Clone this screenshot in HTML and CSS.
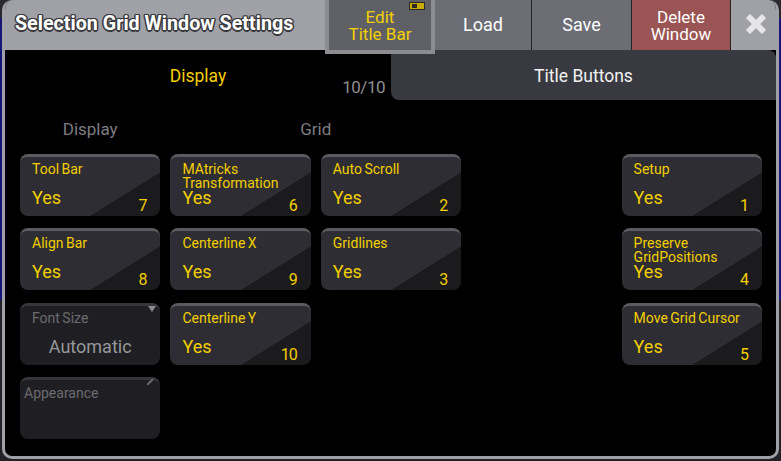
FILE: index.html
```html
<!DOCTYPE html>
<html lang="en">
<head>
  <meta charset="UTF-8" />
  <title>Selection Grid Window Settings</title>
  <link rel="stylesheet" href="styles.css">
</head>
<body>
  <div class="window">
    <header class="titlebar">
      <h1 class="title">Selection Grid Window Settings</h1>
      <div class="tb-btn tb-edit">Edit<br>Title Bar<span class="toggle"><span class="knob"></span></span></div>
      <div class="tb-btn tb-plain">Load</div>
      <div class="tb-btn tb-plain tb-sep">Save</div>
      <div class="tb-btn tb-delete tb-sep">Delete<br>Window</div>
      <div class="tb-btn tb-close tb-sep">
        <svg width="22" height="22" viewBox="0 0 22 22">
          <path d="M3 3 L19 19 M19 3 L3 19" stroke="#e6e6e8" stroke-width="6" fill="none" />
        </svg>
      </div>
    </header>

    <nav class="tabs">
      <div class="tab tab-active">Display<span class="pager">10/10</span></div>
      <div class="tab tab-other">Title Buttons</div>
    </nav>

    <main class="content">
      <div class="sections">
        <div class="sec">Display</div>
        <div class="sec sec-grid">Grid</div>
      </div>

      <div class="grid">
        <div class="cell">
          <div class="cell-label">Tool Bar</div>
          <div class="cell-row"><span class="cell-value">Yes</span><span class="cell-num">7</span></div>
        </div>
        <div class="cell">
          <div class="cell-label">MAtricks<br>Transformation</div>
          <div class="cell-row"><span class="cell-value">Yes</span><span class="cell-num">6</span></div>
        </div>
        <div class="cell">
          <div class="cell-label">Auto Scroll</div>
          <div class="cell-row"><span class="cell-value">Yes</span><span class="cell-num">2</span></div>
        </div>
        <div class="cell col5">
          <div class="cell-label">Setup</div>
          <div class="cell-row"><span class="cell-value">Yes</span><span class="cell-num">1</span></div>
        </div>

        <div class="cell">
          <div class="cell-label">Align Bar</div>
          <div class="cell-row"><span class="cell-value">Yes</span><span class="cell-num">8</span></div>
        </div>
        <div class="cell">
          <div class="cell-label">Centerline X</div>
          <div class="cell-row"><span class="cell-value">Yes</span><span class="cell-num">9</span></div>
        </div>
        <div class="cell">
          <div class="cell-label">Gridlines</div>
          <div class="cell-row"><span class="cell-value">Yes</span><span class="cell-num">3</span></div>
        </div>
        <div class="cell col5">
          <div class="cell-label">Preserve<br>GridPositions</div>
          <div class="cell-row"><span class="cell-value">Yes</span><span class="cell-num">4</span></div>
        </div>

        <div class="cell cell-off cell-drop">
          <div class="cell-label">Font Size</div>
          <div class="cell-center">Automatic</div>
        </div>
        <div class="cell">
          <div class="cell-label">Centerline Y</div>
          <div class="cell-row"><span class="cell-value">Yes</span><span class="cell-num">10</span></div>
        </div>
        <div class="cell col5">
          <div class="cell-label">Move Grid Cursor</div>
          <div class="cell-row"><span class="cell-value">Yes</span><span class="cell-num">5</span></div>
        </div>

        <div class="cell cell-off cell-edit">
          <div class="cell-label cell-label-tight">Appearance</div>
        </div>
      </div>
    </main>
  </div>
</body>
</html>
```

FILE: styles.css
```css
body {
  margin: 0;
  height: 461px;
  overflow: hidden;
  background: linear-gradient(#2a2a2e 18px, #16167a 18px, #16167a 300px, #222226 300px);
  font-family: Roboto, "Noto Sans", sans-serif;
}
.window {
  box-sizing: border-box;
  width: 777px;
  height: 459px;
  margin-left: 2px;
  background: #000;
  border: 3px solid #a0a1a7;
  border-top: 0;
  border-radius: 10px;
  overflow: hidden;
}

/* title bar */
.titlebar {
  display: flex;
  height: 50px;
  background: #a0a1a7;
}
.title {
  flex: 1;
  margin: 0;
  padding-left: 10px;
  font-size: 19.7px;
  font-weight: bold;
  line-height: 48px;
  color: #fff;
  text-shadow: -1px -1px 0 #3a3a3e, 1px -1px 0 #3a3a3e, -1px 1px 0 #3a3a3e, 1px 1px 0 #3a3a3e,
    0 1.5px 0 #3a3a3e, 0 -1.5px 0 #3a3a3e, 1.5px 0 0 #3a3a3e, -1.5px 0 0 #3a3a3e;
  white-space: nowrap;
}
.tb-btn {
  display: flex;
  align-items: center;
  justify-content: center;
  text-align: center;
  color: #fff;
  font-size: 17px;
  line-height: 17px;
}
.tb-sep {
  border-left: 1px solid #232326;
}
.tb-edit {
  position: relative;
  box-sizing: border-box;
  width: 110px;
  height: 54px;
  padding-top: 1px;
  background: #5f6065;
  border: 4px solid #8c8d91;
  border-top: 0;
  color: #f5d000;
}
.toggle {
  position: absolute;
  top: 2px;
  right: 6px;
  box-sizing: border-box;
  width: 16px;
  height: 8px;
  background: #c9aa00;
  border: 1px solid #2a2a20;
}
.knob {
  position: absolute;
  left: 2px;
  top: 1px;
  width: 5px;
  height: 4px;
  background: #2a2a20;
}
.tb-plain {
  width: 96px;
  background: #6c6d75;
  font-size: 18px;
  padding-bottom: 2px;
}
.tb-plain.tb-sep {
  width: 99px;
}
.tb-delete {
  width: 98px;
  padding-top: 1px;
  background: #9a5453;
}
.tb-close {
  width: 46px;
  padding: 0 0 2px 5px;
  box-sizing: border-box;
}

/* tabs */
.tabs {
  display: flex;
  height: 50px;
}
.tab {
  display: flex;
  align-items: center;
  justify-content: center;
  padding-top: 2px;
  font-size: 17.5px;
}
.tab-active {
  position: relative;
  width: 386px;
  color: #f3cf00;
}
.pager {
  position: absolute;
  right: 6px;
  bottom: 3px;
  color: #8e8e90;
  font-size: 17px;
  letter-spacing: -0.5px;
}
.tab-other {
  flex: 1;
  background: #393941;
  color: #f2f2f2;
  border-radius: 0 8px 0 8px;
}

/* content */
.content {
  padding: 19px 0 0 15px;
}
.sections,
.grid {
  display: grid;
  width: 742px;
  grid-template-columns: repeat(5, 1fr);
  column-gap: 10px;
}
.sec {
  color: #7c7c80;
  font-size: 17px;
  line-height: 20px;
  text-align: center;
}
.sec-grid {
  grid-column: span 2;
}
.grid {
  margin-top: 15px;
  grid-auto-rows: 62px;
  row-gap: 12.3px;
}
.col5 {
  grid-column: 5;
}
.cell {
  box-sizing: border-box;
  display: flex;
  flex-direction: column;
  padding: 6px 14px 2px 12px;
  border-top: 3px solid #5a5a60;
  border-radius: 8px;
  background: linear-gradient(148deg, #2d2d33 70%, #1b1b1e 70.4%);
  color: #f3cf00;
}
.cell-label {
  height: 25px;
  flex-shrink: 0;
  font-size: 14px;
  line-height: 13.5px;
  word-spacing: -1px;
}
.cell-row {
  flex: 1;
  display: flex;
  justify-content: space-between;
}
.cell-value {
  font-size: 18px;
  line-height: 20px;
}
.cell-num {
  align-self: flex-end;
  font-size: 16px;
  line-height: 16px;
  letter-spacing: -1px;
}

.cell-off {
  position: relative;
  background: #1f1f23;
  border-top-color: #36363a;
}
.cell-off .cell-label {
  color: #6b6b6f;
}
.cell-center {
  text-align: center;
  padding-left: 2px;
  color: #97979a;
  font-size: 18px;
  line-height: 20px;
}
.cell-drop::after {
  content: "";
  position: absolute;
  top: 0;
  right: 4px;
  border-left: 4px solid transparent;
  border-right: 4px solid transparent;
  border-top: 6px solid #8a8a8e;
}
.cell-edit::after {
  content: "";
  position: absolute;
  top: 1px;
  right: 6px;
  width: 8px;
  height: 1.5px;
  background: #6e6e72;
  transform: rotate(-45deg);
}
.cell-label-tight {
  margin-left: -8px;
  padding-top: 1px;
}
```
